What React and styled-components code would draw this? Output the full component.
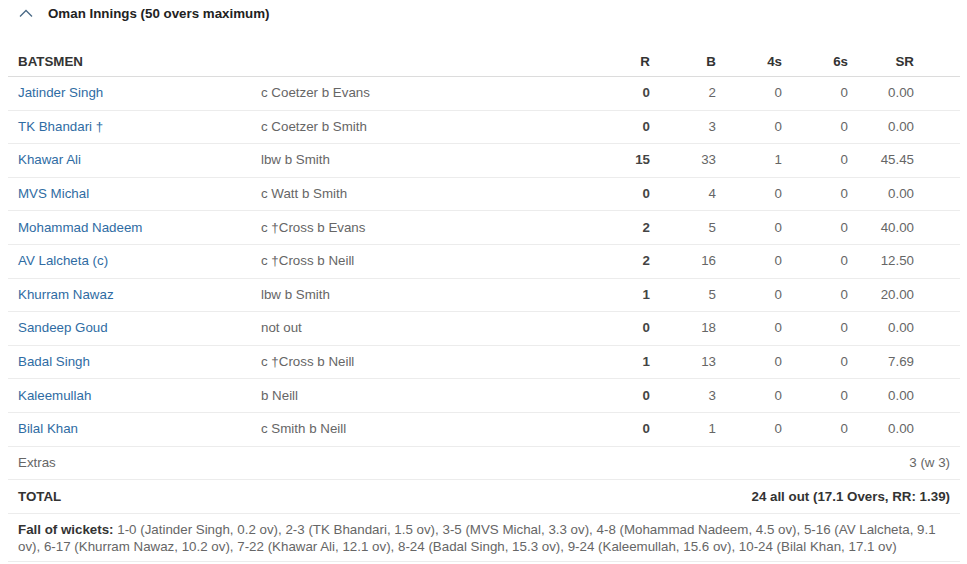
import React from "react";
import styled, { createGlobalStyle } from "styled-components";

const Global = createGlobalStyle`
  body { margin: 0; background: #fff; font-family: Arial, "Liberation Sans", Helvetica, sans-serif; }
`;

const Page = styled.div`
  padding: 0 7px 0 8px;
  font-size: 13.33px;
  color: #666;
`;

const Title = styled.div`
  display: flex;
  align-items: center;
  gap: 15px;
  height: 27px;
  padding-left: 11px;
  font-weight: bold;
  color: #222;
`;

const Table = styled.div`
  margin-top: 18px;
  display: flex;
  flex-direction: column;
`;

const Row = styled.div`
  display: grid;
  grid-template-columns: 243px 343px repeat(5, 66px) 36px;
  align-items: ${(p) => (p.$head ? "end" : "center")};
  height: ${(p) => (p.$head ? "32px" : "33.6px")};
  padding-bottom: ${(p) => (p.$head ? "6px" : "0")};
  box-sizing: border-box;
  border-bottom: 1px solid ${(p) => (p.$head ? "#dcdcdc" : "#ececec")};
  line-height: 16px;
`;

const Cell = styled.div`
  padding: 0 10px;
  text-align: ${(p) => (p.$right ? "right" : "left")};
  font-weight: ${(p) => (p.$bold ? "bold" : "normal")};
  color: ${(p) => p.$color || "#666"};
  white-space: nowrap;
`;

const HeadCell = styled(Cell)`
  font-weight: bold;
  color: #333;
`;

const Name = styled.a`
  color: #2f6ca3;
  text-decoration: none;
`;

const WideRow = styled.div`
  display: flex;
  justify-content: space-between;
  align-items: center;
  height: 33.6px;
  box-sizing: border-box;
  padding: 0 10px;
  border-bottom: 1px solid #ececec;
  font-weight: ${(p) => (p.$bold ? "bold" : "normal")};
  color: ${(p) => (p.$bold ? "#333" : "#666")};
`;

const Fow = styled.div`
  padding: 7px 10px 6px;
  line-height: 17px;
  border-bottom: 1px solid #ececec;
  color: #666;
  b { color: #333; }
`;

const Chevron = () => (
  <svg width="14" height="9" viewBox="0 0 14 9" fill="none">
    <path d="M1 7.5 L7 1.5 L13 7.5" stroke="#4a6a86" strokeWidth="1.3" />
  </svg>
);

const batsmen = [
  ["Jatinder Singh", "c Coetzer b Evans", 0, 2, 0, 0, "0.00"],
  ["TK Bhandari \u2020", "c Coetzer b Smith", 0, 3, 0, 0, "0.00"],
  ["Khawar Ali", "lbw b Smith", 15, 33, 1, 0, "45.45"],
  ["MVS Michal", "c Watt b Smith", 0, 4, 0, 0, "0.00"],
  ["Mohammad Nadeem", "c \u2020Cross b Evans", 2, 5, 0, 0, "40.00"],
  ["AV Lalcheta (c)", "c \u2020Cross b Neill", 2, 16, 0, 0, "12.50"],
  ["Khurram Nawaz", "lbw b Smith", 1, 5, 0, 0, "20.00"],
  ["Sandeep Goud", "not out", 0, 18, 0, 0, "0.00"],
  ["Badal Singh", "c \u2020Cross b Neill", 1, 13, 0, 0, "7.69"],
  ["Kaleemullah", "b Neill", 0, 3, 0, 0, "0.00"],
  ["Bilal Khan", "c Smith b Neill", 0, 1, 0, 0, "0.00"],
];

export default function App() {
  return (
    <Page>
      <Global />
      <Title>
        <Chevron />
        <span>Oman Innings (50 overs maximum)</span>
      </Title>
      <Table>
        <Row $head>
          <HeadCell>BATSMEN</HeadCell>
          <HeadCell />
          <HeadCell $right>R</HeadCell>
          <HeadCell $right>B</HeadCell>
          <HeadCell $right>4s</HeadCell>
          <HeadCell $right>6s</HeadCell>
          <HeadCell $right>SR</HeadCell>
          <HeadCell />
        </Row>
        {batsmen.map((b) => (
          <Row key={b[0]}>
            <Cell>
              <Name href="#">{b[0]}</Name>
            </Cell>
            <Cell>{b[1]}</Cell>
            <Cell $right $bold $color="#444">{b[2]}</Cell>
            <Cell $right>{b[3]}</Cell>
            <Cell $right>{b[4]}</Cell>
            <Cell $right>{b[5]}</Cell>
            <Cell $right>{b[6]}</Cell>
            <Cell />
          </Row>
        ))}
        <WideRow>
          <span>Extras</span>
          <span>3 (w 3)</span>
        </WideRow>
        <WideRow $bold>
          <span>TOTAL</span>
          <span>24 all out (17.1 Overs, RR: 1.39)</span>
        </WideRow>
        <Fow>
          <b>Fall of wickets:</b> 1-0 (Jatinder Singh, 0.2 ov), 2-3 (TK Bhandari, 1.5 ov), 3-5 (MVS Michal, 3.3 ov), 4-8 (Mohammad Nadeem, 4.5 ov), 5-16 (AV Lalcheta, 9.1 ov), 6-17 (Khurram Nawaz, 10.2 ov), 7-22 (Khawar Ali, 12.1 ov), 8-24 (Badal Singh, 15.3 ov), 9-24 (Kaleemullah, 15.6 ov), 10-24 (Bilal Khan, 17.1 ov)
        </Fow>
      </Table>
    </Page>
  );
}
